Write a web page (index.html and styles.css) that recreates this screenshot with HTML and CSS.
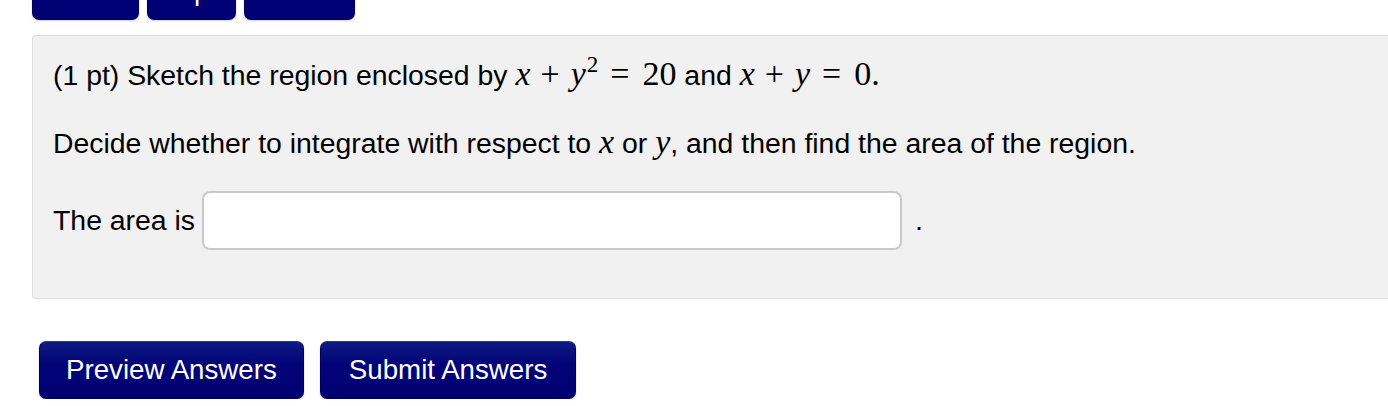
FILE: index.html
```html
<!DOCTYPE html>
<html>
<head>
<meta charset="utf-8">
<link rel="stylesheet" href="styles.css">
</head>
<body>
<div class="nav">
  <a class="btn nav-btn prev">Prev</a>
  <a class="btn nav-btn">Up</a>
  <a class="btn nav-btn">Next</a>
</div>
<div class="problem">
  <p>(1 pt) Sketch the region enclosed by <span class="math"><i>x</i><span class="op">+</span><i>y</i><sup>2</sup><span class="rel">=</span>20</span> and <span class="math"><i>x</i><span class="op">+</span><i>y</i><span class="rel">=</span>0.</span></p>
  <p>Decide whether to integrate with respect to <span class="math"><i>x</i></span> or <span class="math"><i>y</i></span>, and then find the area of the region.</p>
  <div class="answer-row">
    <span class="label">The area is</span>
    <input class="answer" type="text">
    <span class="dot">.</span>
  </div>
</div>
<div class="actions">
  <button class="btn action-btn">Preview Answers</button>
  <button class="btn action-btn submit">Submit Answers</button>
</div>
</body>
</html>
```
FILE: styles.css
```css
html, body {
  margin: 0;
  padding: 0;
  background: #ffffff;
  font-family: "Liberation Sans", Arial, Helvetica, sans-serif;
  font-size: 28.4px;
  color: #000;
  overflow: hidden;
}
.nav {
  display: flex;
  gap: 8px;
  margin: -38px 0 0 32px;
  height: 58px;
}
.btn {
  display: inline-flex;
  align-items: center;
  justify-content: center;
  box-sizing: border-box;
  color: #fff;
  font-family: "Liberation Sans", Arial, Helvetica, sans-serif;
  font-size: 27.7px;
  background: linear-gradient(#0e1a82, #020377 40%, #000072);
  border: 1px solid #00005e;
  border-top-color: #2a3890;
  border-radius: 7px;
  box-shadow: 0 1px 2px rgba(0,0,0,0.2);
  padding: 0 26px;
  height: 58px;
}
.nav-btn { height: 58px; }
.nav-btn.prev { padding: 0 24px; }
.problem {
  margin: 15px 0 0 32px;
  background: #f1f1f1;
  border: 1px solid #dcdcdc;
  border-right: none;
  border-radius: 4px 0 0 4px;
  padding: 18px 20px 20px;
}
.problem p {
  margin: 0 0 27px;
  line-height: 40px;
}
.math {
  font-family: "Liberation Serif", "Times New Roman", serif;
  font-size: 34px;
}
.math i { font-style: italic; }
.math sup {
  font-size: 23px;
  line-height: 0;
  vertical-align: 13px;
  margin-left: 1px;
}
.op { margin: 0 11px 0 10px; }
.rel { margin: 0 13px 0 12px; }
.answer-row {
  display: flex;
  align-items: center;
  margin-bottom: 27px;
  height: 61px;
}
.label { margin-right: 7px; }
.answer {
  box-sizing: border-box;
  width: 700px;
  height: 59px;
  border: 2px solid #c9c9c9;
  border-radius: 8px;
  background: #fff;
  margin: 0;
  padding: 0 10px;
}
.dot { margin-left: 13px; }
.actions {
  display: flex;
  gap: 16px;
  margin: 42px 0 0 39px;
}
.action-btn { height: 58px; padding: 0 26px; }
.action-btn.submit { padding: 0 28px; }
```
